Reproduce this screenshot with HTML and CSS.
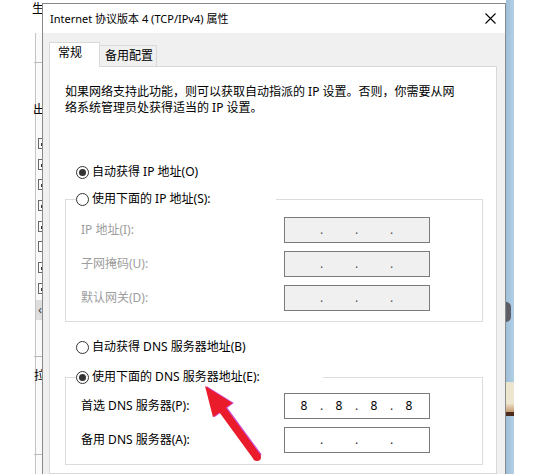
FILE: index.html
```html
<!DOCTYPE html>
<html lang="zh-CN">
<head>
<meta charset="utf-8">
<title>Internet 协议版本 4 (TCP/IPv4) 属性</title>
<link rel="stylesheet" href="styles.css">
</head>
<body>
<div class="desktop">
  <div class="bgwin">
    <div class="bg-title">生</div>
    <div class="bg-hline bg-h1"></div>
    <div class="bg-char bg-c1">出</div>
    <div class="bg-list">
      <span class="cb on"></span>
      <span class="cb on"></span>
      <span class="cb on"></span>
      <span class="cb on"></span>
      <span class="cb on"></span>
      <span class="cb"></span>
      <span class="cb on"></span>
      <span class="cb on"></span>
      <span class="bg-scroll">‹</span>
    </div>
    <div class="bg-hline bg-h2"></div>
    <div class="bg-char bg-c2">拉</div>
    <div class="bg-hline bg-h3"></div>
  </div>

  <div class="dialog">
    <div class="titlebar">
      <span class="title">Internet 协议版本 4 (TCP/IPv4) 属性</span>
      <svg class="close" width="11" height="11" viewBox="0 0 11 11"><path d="M0.5 0.5L10.5 10.5M10.5 0.5L0.5 10.5" stroke="#000" stroke-width="1.1" fill="none"/></svg>
    </div>
    <div class="dlgbody">
      <div class="tabs">
        <div class="tab active">常规</div>
        <div class="tab">备用配置</div>
      </div>
      <div class="panel">
        <p class="intro">如果网络支持此功能，则可以获取自动指派的 IP 设置。否则，你需要从网<br>络系统管理员处获得适当的 IP 设置。</p>

        <div class="radio r-auto-ip"><span class="rb on"></span>自动获得 IP 地址(O)</div>

        <fieldset class="group group-ip">
          <legend class="radio legend-ip"><span class="rb"></span>使用下面的 IP 地址(S):</legend>
          <div class="field disabled">
            <span class="flabel">IP 地址(I):</span>
            <div class="ipbox"><span class="oct"></span><span class="dot">.</span><span class="oct"></span><span class="dot">.</span><span class="oct"></span><span class="dot">.</span><span class="oct"></span></div>
          </div>
          <div class="field disabled">
            <span class="flabel">子网掩码(U):</span>
            <div class="ipbox"><span class="oct"></span><span class="dot">.</span><span class="oct"></span><span class="dot">.</span><span class="oct"></span><span class="dot">.</span><span class="oct"></span></div>
          </div>
          <div class="field disabled">
            <span class="flabel">默认网关(D):</span>
            <div class="ipbox"><span class="oct"></span><span class="dot">.</span><span class="oct"></span><span class="dot">.</span><span class="oct"></span><span class="dot">.</span><span class="oct"></span></div>
          </div>
        </fieldset>

        <div class="radio r-auto-dns"><span class="rb"></span>自动获得 DNS 服务器地址(B)</div>

        <fieldset class="group group-dns">
          <legend class="radio legend-dns"><span class="rb on"></span>使用下面的 DNS 服务器地址(E):</legend>
          <div class="field">
            <span class="flabel">首选 DNS 服务器(P):</span>
            <div class="ipbox"><span class="oct">8</span><span class="dot">.</span><span class="oct">8</span><span class="dot">.</span><span class="oct">8</span><span class="dot">.</span><span class="oct">8</span></div>
          </div>
          <div class="field">
            <span class="flabel">备用 DNS 服务器(A):</span>
            <div class="ipbox"><span class="oct"></span><span class="dot">.</span><span class="oct"></span><span class="dot">.</span><span class="oct"></span><span class="dot">.</span><span class="oct"></span></div>
          </div>
        </fieldset>
      </div>
    </div>
  </div>

  <div class="wallpaper">
    <div class="wp-dark"></div>
    <div class="wp-cream"></div>
    <div class="wp-brown"></div>
  </div>
  <div class="rest"></div>

  <svg class="arrow" width="558" height="474" viewBox="0 0 558 474">
    <polygon points="206.5,386 233.9,403.1 227.4,407.8 261.7,454.6 255.3,459.4 221,412.6 214.5,417.3" fill="#cf4fd6"/>
    <polygon points="205,386 232.4,403.1 225.9,407.8 260.2,454.6 253.8,459.4 219.5,412.6 213,417.3" fill="#ea1c2c"/>
    <circle cx="257" cy="457" r="4" fill="#ea1c2c"/>
  </svg>
</div>
</body>
</html>
```

FILE: styles.css
```css
* { box-sizing: border-box; }

html, body {
  margin: 0;
  padding: 0;
  background: #fff;
}

body {
  width: 558px;
  height: 474px;
  overflow: hidden;
  font-family: "Noto Sans", "Noto Sans CJK SC", sans-serif;
  font-size: 12px;
  line-height: 16px;
  color: #000;
}

.desktop {
  position: relative;
  display: flex;
  width: 558px;
  height: 474px;
  overflow: hidden;
}

/* ---------- window behind (left strip), partly covered by the dialog ---------- */
.bgwin {
  flex: none;
  width: 42px;
  height: 474px;
  display: flex;
  flex-direction: column;
  background: linear-gradient(to right, #fff 0, #fff 35px, #c4c4c4 35px, #c4c4c4 36px, #fafafa 36px);
  background-repeat: no-repeat;
  background-position: 0 33px;
}
.bg-title {
  padding-left: 32px;
  margin-top: 2px;
  white-space: nowrap;
  line-height: 14px;
}
.bg-hline {
  height: 1px;
  background: #b9b9b9;
  margin-left: 34px;
}
.bg-h1 { margin-top: 46px; }
.bg-c1 {
  margin-top: 39px;
  padding-left: 33px;
  white-space: nowrap;
}
.bg-list {
  margin-top: 20px;
  display: flex;
  flex-direction: column;
  padding-left: 38px;
}
.cb {
  display: block;
  width: 13px;
  height: 11px;
  border: 1px solid #6a6a6a;
  margin-bottom: 9.7px;
  background: #fff;
}
.cb.on {
  background: linear-gradient(#fff 0, #fff 4px, #333 4px, #333 7px, #fff 7px);
  background-size: 4px 11px;
  background-position: 2px 0;
  background-repeat: no-repeat;
}
.bg-scroll {
  display: block;
  width: 8px;
  height: 20px;
  margin-left: -2px;
  margin-top: -4px;
  background: #dedede;
  color: #444;
  font-size: 13px;
  line-height: 19px;
  text-align: center;
}
.bg-h2 { margin-top: 36px; }
.bg-c2 {
  margin-top: 11px;
  padding-left: 34px;
  white-space: nowrap;
}
.bg-h3 { margin-top: 70px; }

/* ---------- dialog ---------- */
.dialog {
  flex: none;
  position: relative;
  z-index: 1;
  width: 464px;
  margin-top: 3px;
  height: 471px;
  border: 1px solid #8a8a8a;
  border-bottom: none;
  background: #f0f0f0;
  display: flex;
  flex-direction: column;
}
.titlebar {
  flex: none;
  height: 29px;
  background: #fff;
  display: flex;
  align-items: center;
  justify-content: space-between;
  padding: 0 9px 0 7px;
}
.title {
  font-size: 11px;
  white-space: nowrap;
}
.close { display: block; }

.dlgbody {
  flex: 1;
  padding: 9px 8px 0 6px;
  display: flex;
  flex-direction: column;
}
.tabs {
  display: flex;
  align-items: flex-end;
}
.tab {
  border: 1px solid #d9d9d9;
  border-bottom: none;
  white-space: nowrap;
}
.tab.active {
  width: 51px;
  height: 25px;
  padding: 2px 0 0 8px;
  background: #fff;
  margin-bottom: -1px;
  position: relative;
  z-index: 1;
}
.tab:not(.active) {
  height: 21px;
  padding: 2px 5px 0 5px;
  background: #f0f0f0;
  border-left: none;
  width: 57px;
}
.panel {
  flex: 1;
  background: #fff;
  border: 1px solid #d9d9d9;
  padding: 17px 13px 0 15px;
}

.intro {
  margin: 0;
  white-space: nowrap;
}

.radio {
  display: flex;
  align-items: center;
  height: 16px;
  white-space: nowrap;
}
.rb {
  flex: none;
  width: 13px;
  height: 13px;
  border: 1px solid #333;
  border-radius: 50%;
  background: #fff;
  margin-right: 3px;
  display: flex;
  align-items: center;
  justify-content: center;
}
.rb.on::after {
  content: "";
  width: 7px;
  height: 7px;
  border-radius: 50%;
  background: #333;
}
.r-auto-ip { margin: 48px 0 0 11px; }
.r-auto-dns { margin: 17px 0 0 11px; }

.group {
  margin: 0;
  min-width: 0;
  border: 1px solid #dcdcdc;
  padding: 10px 13px 10px 15px;
}
.group-ip { margin-top: 11px; }
.group-dns { margin-top: 14px; padding: 8px 13px 11px 15px; }

.group legend {
  padding: 0;
  margin-left: -5px;
  background: #fff;
}
.legend-ip { width: 200px; }
.legend-dns { width: 247px; }

.field {
  display: flex;
  align-items: center;
  height: 26px;
}
.field + .field { margin-top: 8px; }
.flabel {
  width: 203px;
  flex: none;
  white-space: nowrap;
}
.field.disabled .flabel { color: #9d9d9d; }

.ipbox {
  width: 146px;
  height: 26px;
  border: 1px solid #7a7a7a;
  background: #fff;
  display: flex;
  align-items: center;
  padding-left: 5px;
}
.field.disabled .ipbox { background: #f0f0f0; }
.oct {
  width: 28px;
  text-align: center;
}
.dot {
  width: 7px;
  text-align: center;
  color: #333;
}
.field.disabled .dot { color: #555; }

/* ---------- wallpaper strip on the right ---------- */
.wallpaper {
  flex: none;
  width: 8px;
  height: 474px;
  background: linear-gradient(to right, #9fbfd8, #b3d0e6);
  display: flex;
  flex-direction: column;
}
.wp-dark {
  margin-top: 302px;
  height: 20px;
  width: 5px;
  background: #5d5d66;
  border-radius: 0 6px 6px 0;
}
.wp-cream {
  margin-top: 60px;
  height: 22px;
  background: #ece6cf;
}
.wp-brown {
  height: 8px;
  background: linear-gradient(#e9dcc4, #c79b72);
}
.wp-brown::after {
  content: "";
  display: block;
  margin-top: 8px;
  height: 4px;
  background: #4b2b1c;
}
.rest {
  flex: 1;
  background: #fff;
}

/* ---------- annotation arrow ---------- */
.arrow {
  position: absolute;
  left: 0;
  top: 0;
  z-index: 2;
  pointer-events: none;
}
```
